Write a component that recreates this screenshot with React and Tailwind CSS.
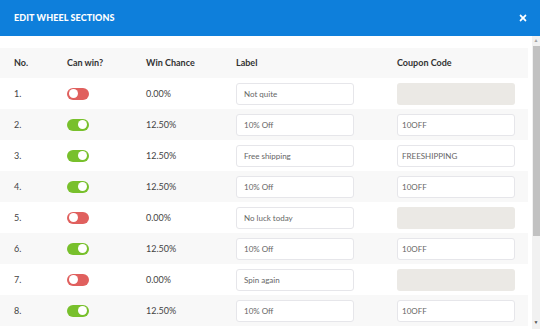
import React from "react";
import { FaTimes } from "react-icons/fa";

const rows = [
  { no: 1, win: false, chance: "0.00%", label: "Not quite", code: "" },
  { no: 2, win: true, chance: "12.50%", label: "10% Off", code: "10OFF" },
  { no: 3, win: true, chance: "12.50%", label: "Free shipping", code: "FREESHIPPING" },
  { no: 4, win: true, chance: "12.50%", label: "10% Off", code: "10OFF" },
  { no: 5, win: false, chance: "0.00%", label: "No luck today", code: "" },
  { no: 6, win: true, chance: "12.50%", label: "10% Off", code: "10OFF" },
  { no: 7, win: false, chance: "0.00%", label: "Spin again", code: "" },
  { no: 8, win: true, chance: "12.50%", label: "10% Off", code: "10OFF" },
];

const Toggle = ({ on }) => (
  <div
    className={`w-[22px] h-[12px] rounded-full flex items-center px-[2px] ${
      on ? "bg-[#78c02c] justify-end" : "bg-[#e0605e] justify-start"
    }`}
  >
    <div className="w-[9px] h-[9px] rounded-full bg-white" />
  </div>
);

const App = () => {
  return (
    <div
      className="w-[540px] h-[329px] flex flex-col bg-white overflow-hidden text-[#333]"
      style={{ fontFamily: "Lato, 'Open Sans', sans-serif" }}
    >
      <div className="h-[36px] shrink-0 bg-[#0e7fdb] flex items-center justify-between pl-[14px] pr-[12px]">
        <span className="text-white font-black text-[9px] tracking-[0.1px]">EDIT WHEEL SECTIONS</span>
        <FaTimes className="text-white w-[10px] h-[10px]" />
      </div>

      <div className="flex flex-1 min-h-0">
        <div className="flex-1 pt-[12px] pr-[4px] overflow-hidden">
          <div className="h-[30px] bg-[#f8f8f8] flex items-center text-[9px] font-bold text-[#333]">
            <div className="w-[67px] pl-[14px]">No.</div>
            <div className="w-[79px]">Can win?</div>
            <div className="w-[90px]">Win Chance</div>
            <div className="w-[161px]">Label</div>
            <div>Coupon Code</div>
          </div>
          {rows.map((r) => (
            <div
              key={r.no}
              className={`h-[31px] flex items-center text-[9px] text-[#444] ${
                r.no % 2 === 0 ? "bg-[#f8f8f8]" : "bg-white"
              }`}
            >
              <div className="w-[67px] pl-[14px]">{r.no}.</div>
              <div className="w-[79px]">
                <Toggle on={r.win} />
              </div>
              <div className="w-[90px]">{r.chance}</div>
              <div className="w-[161px]">
                <div className="w-[118px] h-[22px] bg-white border border-[#e6e6ea] rounded-[3px] flex items-center pl-[7px] text-[8px] text-[#666]">
                  {r.label}
                </div>
              </div>
              <div>
                {r.win ? (
                  <div className="w-[118px] h-[22px] bg-white border border-[#e6e6ea] rounded-[3px] flex items-center pl-[4px] text-[8px] text-[#666]">
                    {r.code}
                  </div>
                ) : (
                  <div className="w-[118px] h-[22px] bg-[#ebe9e5] rounded-[3px]" />
                )}
              </div>
            </div>
          ))}
        </div>

        <div className="w-[8px] shrink-0 bg-[#f1f1f1] flex flex-col items-center">
          <div className="h-[10px] flex items-center justify-center text-[5px] text-[#a3a3a3]">▲</div>
          <div className="w-[7px] h-[190px] bg-[#c1c1c1]" />
          <div className="flex-1" />
          <div className="h-[12px] flex items-center justify-center text-[5px] text-[#505050]">▼</div>
        </div>
      </div>
    </div>
  );
};

export default App;
